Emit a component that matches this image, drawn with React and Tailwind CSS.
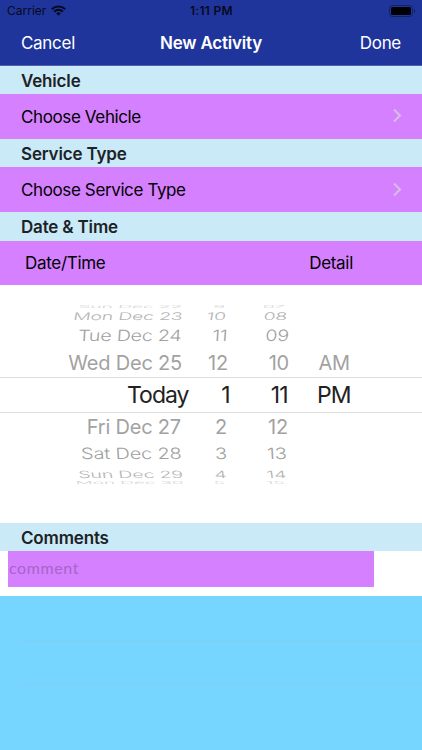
import React from "react";

// Wheel rows, top to bottom. Outer rows are flattened to look like a cylinder
const wheelRows = [
  {
    cells: ["Sun Dec 22", "9", "07", ""],
    row: "h-[4px] grid-cols-[182px_43px_60px_1fr] text-[#d4d4d4]",
    cell: "font-light [transform:skewX(-12deg)_scale(0.97,0.2)]",
  },
  {
    cells: ["Mon Dec 23", "10", "08", ""],
    row: "h-[14px] grid-cols-[182px_44px_61px_1fr] text-[#b4b4b4]",
    cell: "font-light [transform:skewX(-10deg)_scale(0.97,0.52)]",
  },
  {
    cells: ["Tue Dec 24", "11", "09", ""],
    row: "h-[25px] grid-cols-[182px_45px_62px_1fr] text-[#a0a0a0]",
    cell: "font-light [transform:skewX(-4deg)_scale(0.98,0.78)]",
  },
  {
    cells: ["Wed Dec 25", "12", "10", "AM"],
    row: "h-[29px] grid-cols-[182px_46px_61px_1fr] text-[#a2a2a2]",
    cell: "",
  },
  {
    cells: ["Today", "1", "11", "PM"],
    row: "h-[36px] grid-cols-[188.5px_41px_58px_1fr] border-y border-[#dedede] text-[23px] tracking-[-1px] text-[#222]",
    cell: "",
  },
  {
    cells: ["Fri Dec 27", "2", "12", ""],
    row: "h-[28px] grid-cols-[181px_46px_61px_1fr] text-[#a2a2a2]",
    cell: "",
  },
  {
    cells: ["Sat Dec 28", "3", "13", ""],
    row: "h-[26px] grid-cols-[182px_45px_60px_1fr] text-[#a0a0a0]",
    cell: "font-light [transform:skewX(3deg)_scale(1,0.78)]",
  },
  {
    cells: ["Sun Dec 29", "4", "14", ""],
    row: "h-[13px] grid-cols-[183px_43px_60px_1fr] text-[#b4b4b4]",
    cell: "font-light [transform:skewX(8deg)_scale(0.98,0.5)]",
  },
  {
    cells: ["Mon Dec 30", "5", "15", ""],
    row: "h-[6px] grid-cols-[184px_41px_59px_1fr] text-[#d4d4d4]",
    cell: "font-light [transform:skewX(10deg)_scale(0.96,0.2)]",
  },
];

const SectionHeader = ({ children }) => (
  <div className="flex h-[28.4px] shrink-0 items-center bg-[#cbeaf7] pt-[3px] pl-[21px] text-[17px] font-semibold tracking-[-0.17px] text-[#1c2226]">
    {children}
  </div>
);

const LinkRow = ({ children }) => (
  <div className="flex h-[44.9px] shrink-0 items-center justify-between bg-[#d580ff] pl-[21px] pr-[20px] text-[17px] text-black">
    <span className="pt-[2px] tracking-[-0.38px]">{children}</span>
    <svg width="10" height="16" viewBox="0 0 10 16" fill="none" stroke="#d4bfe2" strokeWidth="2">
      <path d="M2 1.5 8 7.5l-6 6" />
    </svg>
  </div>
);

const DateWheel = () => (
  <div className="flex h-[237.5px] shrink-0 flex-col bg-white pt-[20px] text-[20px] tracking-[-0.2px]">
    {wheelRows.map(({ cells, row, cell }) => (
      <div key={cells[0]} className={`grid shrink-0 grid-rows-[100%] items-center leading-none whitespace-nowrap ${row}`}>
        <span className={`origin-right justify-self-end ${cell}`}>{cells[0]}</span>
        <span className={`origin-right justify-self-end ${cell}`}>{cells[1]}</span>
        <span className={`origin-right justify-self-end ${cell}`}>{cells[2]}</span>
        <span className="pl-[29.5px]">{cells[3]}</span>
      </div>
    ))}
  </div>
);

const App = () => {
  return (
    <div className="flex h-[750px] w-[422px] flex-col overflow-hidden bg-[#77d6ff] font-['Inter',sans-serif]">
      <header className="flex h-[65.6px] shrink-0 flex-col border-b border-[#5160ad] bg-[#20359c]">
        <div className="grid h-[22px] grid-cols-3 items-center pl-[7px] pr-[6px] text-[12px] text-[#060a20]">
          <div className="flex items-center gap-[5px]">
            <span>Carrier</span>
            <svg width="15" height="11" viewBox="0 0 15 11" fill="none" stroke="#060a20" strokeWidth="2.2">
              <path d="M.8 4.2a9.6 9.6 0 0 1 13.4 0M3.2 6.7a6.1 6.1 0 0 1 8.6 0" />
              <path d="M7.5 10.8 5.2 8.5a3.2 3.2 0 0 1 4.6 0Z" fill="#060a20" stroke="none" />
            </svg>
          </div>
          <span className="text-center font-semibold tracking-[0.3px]">1:11 PM</span>
          <svg className="justify-self-end" width="27" height="12" viewBox="0 0 27 12">
            <rect x=".5" y=".5" width="23" height="11" rx="3" fill="none" stroke="#14215f" />
            <rect x="2" y="2" width="20" height="8" rx="1.5" fill="#000" />
            <path d="M25 4v4c1.6-.7 1.6-3.3 0-4Z" fill="#14215f" />
          </svg>
        </div>
        <div className="grid h-[43px] grid-cols-3 items-center px-[21px] pt-[2px] text-[17px] text-white">
          <span className="tracking-[-0.3px]">Cancel</span>
          <span className="text-center font-semibold tracking-[-0.2px]">New Activity</span>
          <span className="text-right tracking-[-0.3px]">Done</span>
        </div>
      </header>

      <SectionHeader>Vehicle</SectionHeader>
      <LinkRow>Choose Vehicle</LinkRow>
      <SectionHeader>Service Type</SectionHeader>
      <LinkRow>Choose Service Type</LinkRow>
      <SectionHeader>Date &amp; Time</SectionHeader>
      <div className="flex h-[44.5px] shrink-0 items-center justify-between bg-[#d580ff] pt-[2px] pl-[25px] pr-[69px] text-[17px] tracking-[-0.3px] text-black">
        <span>Date/Time</span>
        <span>Detail</span>
      </div>
      <DateWheel />
      <SectionHeader>Comments</SectionHeader>
      <div className="h-[45px] shrink-0 bg-white pl-[8px]">
        <div className="flex h-[36px] w-[366px] items-center bg-[#d580ff] pb-[2px] pl-px font-['Lato',sans-serif] text-[16px] tracking-[0.6px] text-[#a565c7]">
          comment
        </div>
      </div>

      {/* empty table rows */}
      <div className="ml-[21px] h-[45px] shrink-0 border-b border-[#86cdf2]" />
      <div className="ml-[21px] h-[44.5px] shrink-0 border-b border-[#86cdf2]" />
    </div>
  );
};

export default App;
